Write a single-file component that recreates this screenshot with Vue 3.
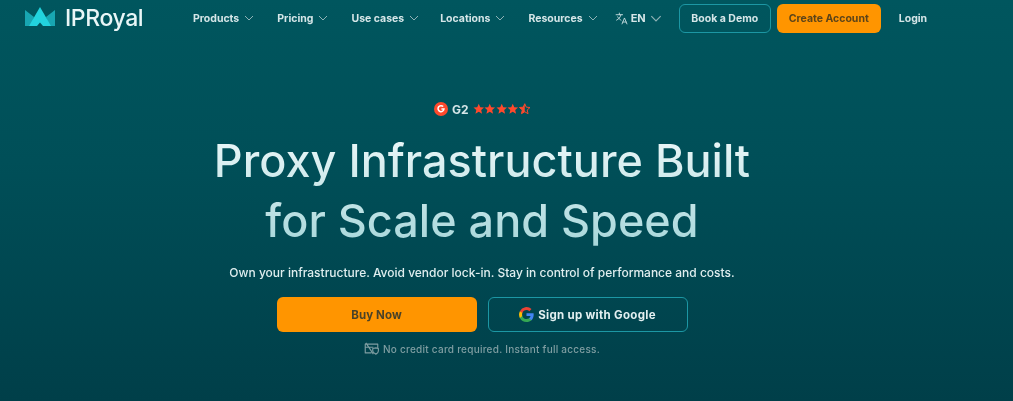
<template>
  <div class="page">
    <header class="nav">
      <div class="brand">
        <svg class="crown" width="30" height="19" viewBox="0 0 30 19">
          <path d="M0 3 L9 10 L7 19 H0 Z" fill="#18a6b2"/>
          <path d="M30 3 V19 H23 L21 10 Z" fill="#18a6b2"/>
          <path d="M15 0 L26 19 H18 L15 15.500 L12 19 H4 Z" fill="#22d3de"/>
        </svg>
        <span class="brand-name">IPRoyal</span>
      </div>

      <nav class="menu">
        <a v-for="item in menu" :key="item" class="menu-item">
          {{ item }}
          <svg class="chev" width="10" height="6" viewBox="0 0 10 6"><path d="M1 1l4 4 4-4"/></svg>
        </a>
        <a class="menu-item lang">
          <svg width="13" height="13" viewBox="0 0 24 24" fill="none" stroke="#cfe3e5" stroke-width="1.600" stroke-linecap="round" stroke-linejoin="round">
            <path d="M2 5h12M8 2v3M11 5c-1 5-4 8-8 10M5 9c1.500 3 4 5 6 6M13 22l4.500-11L22 22M14.500 18.500h6"/>
          </svg>
          <span>EN</span>
          <svg class="chev chev-lang" width="12" height="7" viewBox="0 0 10 6"><path d="M1 1l4 4 4-4"/></svg>
        </a>
      </nav>

      <div class="actions">
        <a class="btn-demo">Book a Demo</a>
        <a class="btn-create">Create Account</a>
        <a class="login">Login</a>
      </div>
    </header>

    <main class="hero">
      <div class="rating">
        <svg width="14" height="14" viewBox="0 0 14 14">
          <circle cx="7" cy="7" r="7" fill="#ff492c"/>
          <path d="M9.200 4.600A3 3 0 1 0 10 7H7.400" fill="none" stroke="#fff" stroke-width="1.500"/>
        </svg>
        <span class="g2">G2</span>
        <span class="stars">
          <svg v-for="n in 4" :key="n" width="11.5" height="11.5" viewBox="0 0 24 24"><path :d="star" fill="#ff492c"/></svg>
          <svg width="11.5" height="11.5" viewBox="0 0 24 24">
            <path :d="star" fill="none" stroke="#ff492c" stroke-width="2"/>
            <path d="M12 1.500 L12 18 L5 22.500 L7 14.500 L.8 9.300 L8.800 8.700 Z" fill="#ff492c"/>
          </svg>
        </span>
      </div>

      <h1 class="title">Proxy Infrastructure Built<br>for Scale and Speed</h1>
      <p class="sub">Own your infrastructure. Avoid vendor lock-in. Stay in control of performance and costs.</p>

      <div class="cta">
        <a class="btn-buy">Buy Now</a>
        <a class="btn-google">
          <svg width="15" height="15" viewBox="0 0 24 24">
            <path fill="#4285F4" d="M23.500 12.300c0-.8-.1-1.600-.2-2.300H12v4.500h6.500a5.500 5.500 0 0 1-2.400 3.600v3h3.800c2.300-2.100 3.600-5.200 3.600-8.800z"/>
            <path fill="#34A853" d="M12 24c3.200 0 6-1.100 7.900-2.900l-3.800-3c-1.100.7-2.400 1.200-4.100 1.200-3.100 0-5.800-2.100-6.700-5H1.400v3.100A12 12 0 0 0 12 24z"/>
            <path fill="#FBBC05" d="M5.300 14.300a7.200 7.200 0 0 1 0-4.600V6.600H1.400a12 12 0 0 0 0 10.800z"/>
            <path fill="#EA4335" d="M12 4.800c1.800 0 3.300.6 4.600 1.800l3.400-3.400A12 12 0 0 0 1.400 6.600l3.900 3.100c.9-2.900 3.600-4.900 6.700-4.900z"/>
          </svg>
          <span>Sign up with Google</span>
        </a>
      </div>

      <div class="note">
        <svg width="15" height="13" viewBox="0 0 24 20" fill="none" stroke="#7f9ea2" stroke-width="1.800" stroke-linejoin="round">
          <path d="M12 17H2V3h20v7M2 8h13M3 1l12 18"/>
          <path d="M14 10l5-1 4 1v4c0 2-2 4-4 5-2-1-5-3-5-5z"/>
        </svg>
        No credit card required. Instant full access.
      </div>
    </main>
  </div>
</template>

<script setup>
const menu = ['Products', 'Pricing', 'Use cases', 'Locations', 'Resources']
const star = 'M12 1.500l3.200 7.200 7.800.7-5.900 5.200 1.800 7.700L12 18.300l-6.900 4 1.800-7.700L1 9.400l7.800-.7z'
</script>

<style>
html, body { margin: 0; background: #00434c; }
</style>

<style scoped>
.page {
  width: 1013px;
  height: 401px;
  overflow: hidden;
  background: linear-gradient(180deg, #00565e 0%, #004f58 40%, #003f49 100%);
  font-family: Inter, "Noto Sans", sans-serif;
  color: #dfeeef;
  filter: blur(0.3px);
}

/* nav */
.nav {
  display: flex;
  align-items: center;
  height: 36px;
  padding-left: 25px;
}
.brand { display: flex; align-items: center; gap: 10px; width: 168px; }
.crown { margin-top: -4px; }
.brand-name { font-size: 23px; font-weight: 500; color: #e9f6f7; letter-spacing: -0.4px; }

.menu { display: flex; align-items: center; gap: 23px; }
.menu-item {
  display: flex;
  align-items: center;
  gap: 5px;
  font-size: 10.500px;
  font-weight: 700;
  color: #d5e6e8;
}
.menu-item:nth-child(4) { margin-left: -2px; }
.chev { fill: none; stroke: #8fb2b6; stroke-width: 1; }
.lang { margin-left: -6px; gap: 3px; font-size: 11px; }
.chev-lang { margin-left: 1px; }

.actions { display: flex; align-items: center; margin-left: 17px; }
.btn-demo {
  box-sizing: border-box;
  width: 92px;
  height: 29px;
  line-height: 27px;
  text-align: center;
  border: 1px solid #1c97a4;
  border-radius: 6px;
  font-size: 10.500px;
  font-weight: 700;
  color: #d5e6e8;
}
.btn-create {
  margin-left: 6px;
  width: 104px;
  height: 29px;
  line-height: 29px;
  text-align: center;
  background: #ff9500;
  border-radius: 6px;
  font-size: 10.500px;
  font-weight: 700;
  color: #5c4419;
}
.login { margin-left: 18px; font-size: 10.500px; font-weight: 700; color: #d5e6e8; }

/* hero */
.hero { display: flex; flex-direction: column; align-items: center; padding: 66px 49px 0 0; }
.rating { display: flex; align-items: center; gap: 3px; height: 14px; }
.g2 { font-size: 12px; font-weight: 700; color: #d5e6e8; margin: 0 1px; }
.stars { display: flex; }
.title {
  margin: 15px 0 0;
  font-size: 45px;
  line-height: 60px;
  font-weight: 500;
  text-align: center;
  background: linear-gradient(180deg, #eef9fa 0%, #a4d5d9 100%);
  -webkit-background-clip: text;
  background-clip: text;
  color: transparent;
}
.sub { margin: 14px 0 0; font-size: 12px; line-height: 16px; font-weight: 500; color: #dfeeef; }

.cta { display: flex; gap: 11px; margin-top: 16px; }
.btn-buy, .btn-google {
  box-sizing: border-box;
  width: 200px;
  height: 35px;
  display: flex;
  align-items: center;
  justify-content: center;
  border-radius: 6px;
  font-size: 11.500px;
  font-weight: 700;
}
.btn-buy { background: #ff9500; color: #4a4228; letter-spacing: 0.1px; }
.btn-google { gap: 4px; border: 1px solid #1c97a4; color: #e3f0f1; letter-spacing: 0.3px; }

.note {
  display: flex;
  align-items: center;
  gap: 4px;
  margin-top: 10px;
  font-size: 10px;
  font-weight: 500;
  letter-spacing: 0.25px;
  color: #7f9ea2;
}
</style>
